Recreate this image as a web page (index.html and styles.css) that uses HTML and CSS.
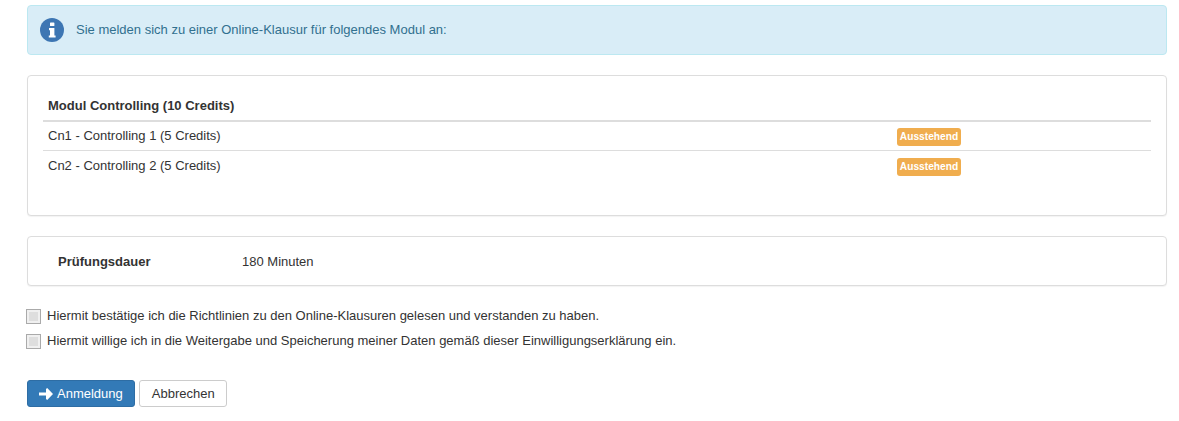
FILE: index.html
```html
<!DOCTYPE html>
<html lang="de">
<head>
<meta charset="utf-8">
<title>Online-Klausur</title>
<link rel="stylesheet" href="styles.css">
</head>
<body>
<div class="alert">
  <svg class="info" viewBox="0 0 24 24" width="24" height="24"><circle cx="12" cy="12" r="12" fill="#3d76b3"/><rect x="10" y="4.500" width="4.400" height="3.600" rx=".6" fill="#fff"/><path d="M9 10h5.400v7.400h1.200v2.200H8.800v-2.200H10v-5.200H9z" fill="#fff"/></svg>
  <span>Sie melden sich zu einer Online-Klausur für folgendes Modul an:</span>
</div>
<div class="panel modules">
  <table>
    <thead><tr><th colspan="2">Modul Controlling (10 Credits)</th></tr></thead>
    <tbody>
      <tr><td class="name">Cn1 - Controlling 1 (5 Credits)</td><td><span class="label">Ausstehend</span></td></tr>
      <tr><td class="name">Cn2 - Controlling 2 (5 Credits)</td><td><span class="label">Ausstehend</span></td></tr>
    </tbody>
  </table>
</div>
<div class="panel duration">
  <strong>Prüfungsdauer</strong>
  <span>180 Minuten</span>
</div>
<div class="checks">
  <label class="check"><span class="box"></span>Hiermit bestätige ich die Richtlinien zu den Online-Klausuren gelesen und verstanden zu haben.</label>
  <label class="check"><span class="box"></span>Hiermit willige ich in die Weitergabe und Speicherung meiner Daten gemäß dieser Einwilligungserklärung ein.</label>
</div>
<div class="actions">
  <button class="btn primary"><svg viewBox="0 0 14 12" width="14" height="12"><path d="M0 4.400h7V1l1.200-1L14 6l-5.800 6L7 11V7.600H0z" fill="#fff"/></svg>Anmeldung</button>
  <button class="btn">Abbrechen</button>
</div>
</body>
</html>
```
FILE: styles.css
```css
* { box-sizing: border-box; }
html, body { margin: 0; background: #fff; }
body {
  padding: 5px 12px 0 27px;
  font: 13px/18px "Liberation Sans", Arial, sans-serif;
  color: #333;
}
.alert {
  display: flex;
  align-items: center;
  gap: 12px;
  height: 50px;
  padding: 0 12px;
  background: #d9edf7;
  border: 1px solid #bce8f1;
  border-radius: 4px;
  color: #31708f;
}
.info { flex: none; }
.panel {
  background: #fff;
  border: 1px solid #ddd;
  border-radius: 4px;
  box-shadow: 0 1px 1px rgba(0,0,0,.05);
}
.modules { margin-top: 20px; height: 141px; padding: 15px 15px 0; }
table { width: 1108px; border-collapse: collapse; }
th {
  text-align: left;
  padding: 5px;
  height: 30px;
  border-bottom: 2px solid #ddd;
  font-weight: bold;
}
td { height: 29px; padding: 5px 5px 4px; vertical-align: top; }
tbody tr + tr td { border-top: 1px solid #ddd; height: 30px; padding-top: 6px; }
.name { width: 849px; }
.label {
  display: block;
  width: 64px;
  height: 18px;
  margin-top: 1px;
  text-align: center;
  background: #f0ad4e;
  border-radius: 3px;
  color: #fff;
  font-size: 10.200px;
  font-weight: bold;
  line-height: 18px;
}
.duration {
  display: flex;
  align-items: center;
  margin-top: 20px;
  height: 50px;
  padding: 2px 0 0 30px;
}
.duration strong { width: 184px; }
.checks { margin-top: 21px; display: flex; flex-direction: column; gap: 7px; }
.check { display: flex; align-items: center; gap: 6px; height: 18px; margin-left: -1px; }
.box {
  width: 15px;
  height: 15px;
  border: 1px solid #aaa;
  background: #dedede;
  box-shadow: inset 0 0 0 2px #f0f0f0;
}
.actions { margin-top: 30px; display: flex; gap: 4px; }
.btn {
  height: 27px;
  padding: 0 11px 0 12px;
  font: 13px/18px "Liberation Sans", Arial, sans-serif;
  color: #333;
  background: #fff;
  border: 1px solid #ccc;
  border-radius: 3px;
  display: flex;
  align-items: center;
}
.primary { background: #337ab7; border-color: #2e6da4; color: #fff; gap: 4px; padding-left: 11px; }
```
